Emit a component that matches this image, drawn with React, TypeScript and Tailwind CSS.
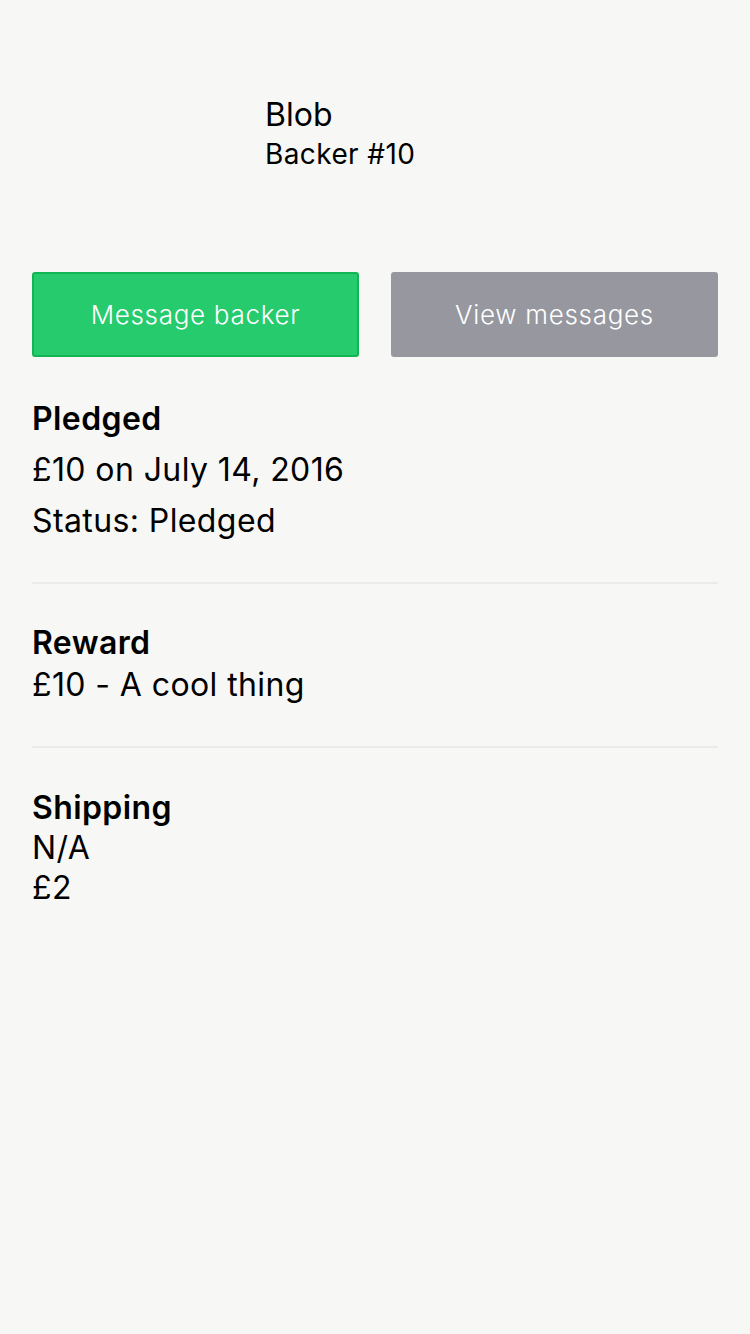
export default function App() {
  return (
    <div
      className="min-h-[1334px] w-full bg-[#f7f7f5] text-black"
      style={{ fontFamily: "Inter, 'Noto Sans', sans-serif" }}
    >
      <div className="px-8">
        {/* Header */}
        <div className="flex pt-[96px]">
          <div className="w-[233px] shrink-0" />
          <div>
            <div className="text-[32px] leading-[38px]">Blob</div>
            <div className="mt-[3px] text-[28px] leading-[34px] tracking-[0.4px]">Backer #10</div>
          </div>
        </div>

        {/* Actions */}
        <div className="mt-[101px] grid grid-cols-2 gap-8">
          <button className="h-[85px] rounded-[3px] border-2 border-[#12b553] bg-[#26cb6d] text-[26px] font-light tracking-[0.7px] text-white">
            Message backer
          </button>
          <button className="h-[85px] rounded-[3px] bg-[#97979f] text-[26px] font-light tracking-[0.7px] text-white">
            View messages
          </button>
        </div>

        {/* Pledged */}
        <div className="mt-[36px] pb-[36px] text-[32px] leading-[51px] tracking-[0.4px]">
          <div className="font-semibold">Pledged</div>
          <div>£10 on July 14, 2016</div>
          <div>Status: Pledged</div>
        </div>
        <div className="h-[2px] bg-[#ebebe9]" />

        {/* Reward */}
        <div className="pt-[38px] pb-[40px] text-[32px] leading-[42px] tracking-[0.4px]">
          <div className="font-semibold">Reward</div>
          <div>£10 - A cool thing</div>
        </div>
        <div className="h-[2px] bg-[#ebebe9]" />

        {/* Shipping */}
        <div className="pt-[40px] text-[32px] leading-[40px] tracking-[0.4px]">
          <div className="font-semibold">Shipping</div>
          <div>N/A</div>
          <div>£2</div>
        </div>
      </div>
    </div>
  );
}
